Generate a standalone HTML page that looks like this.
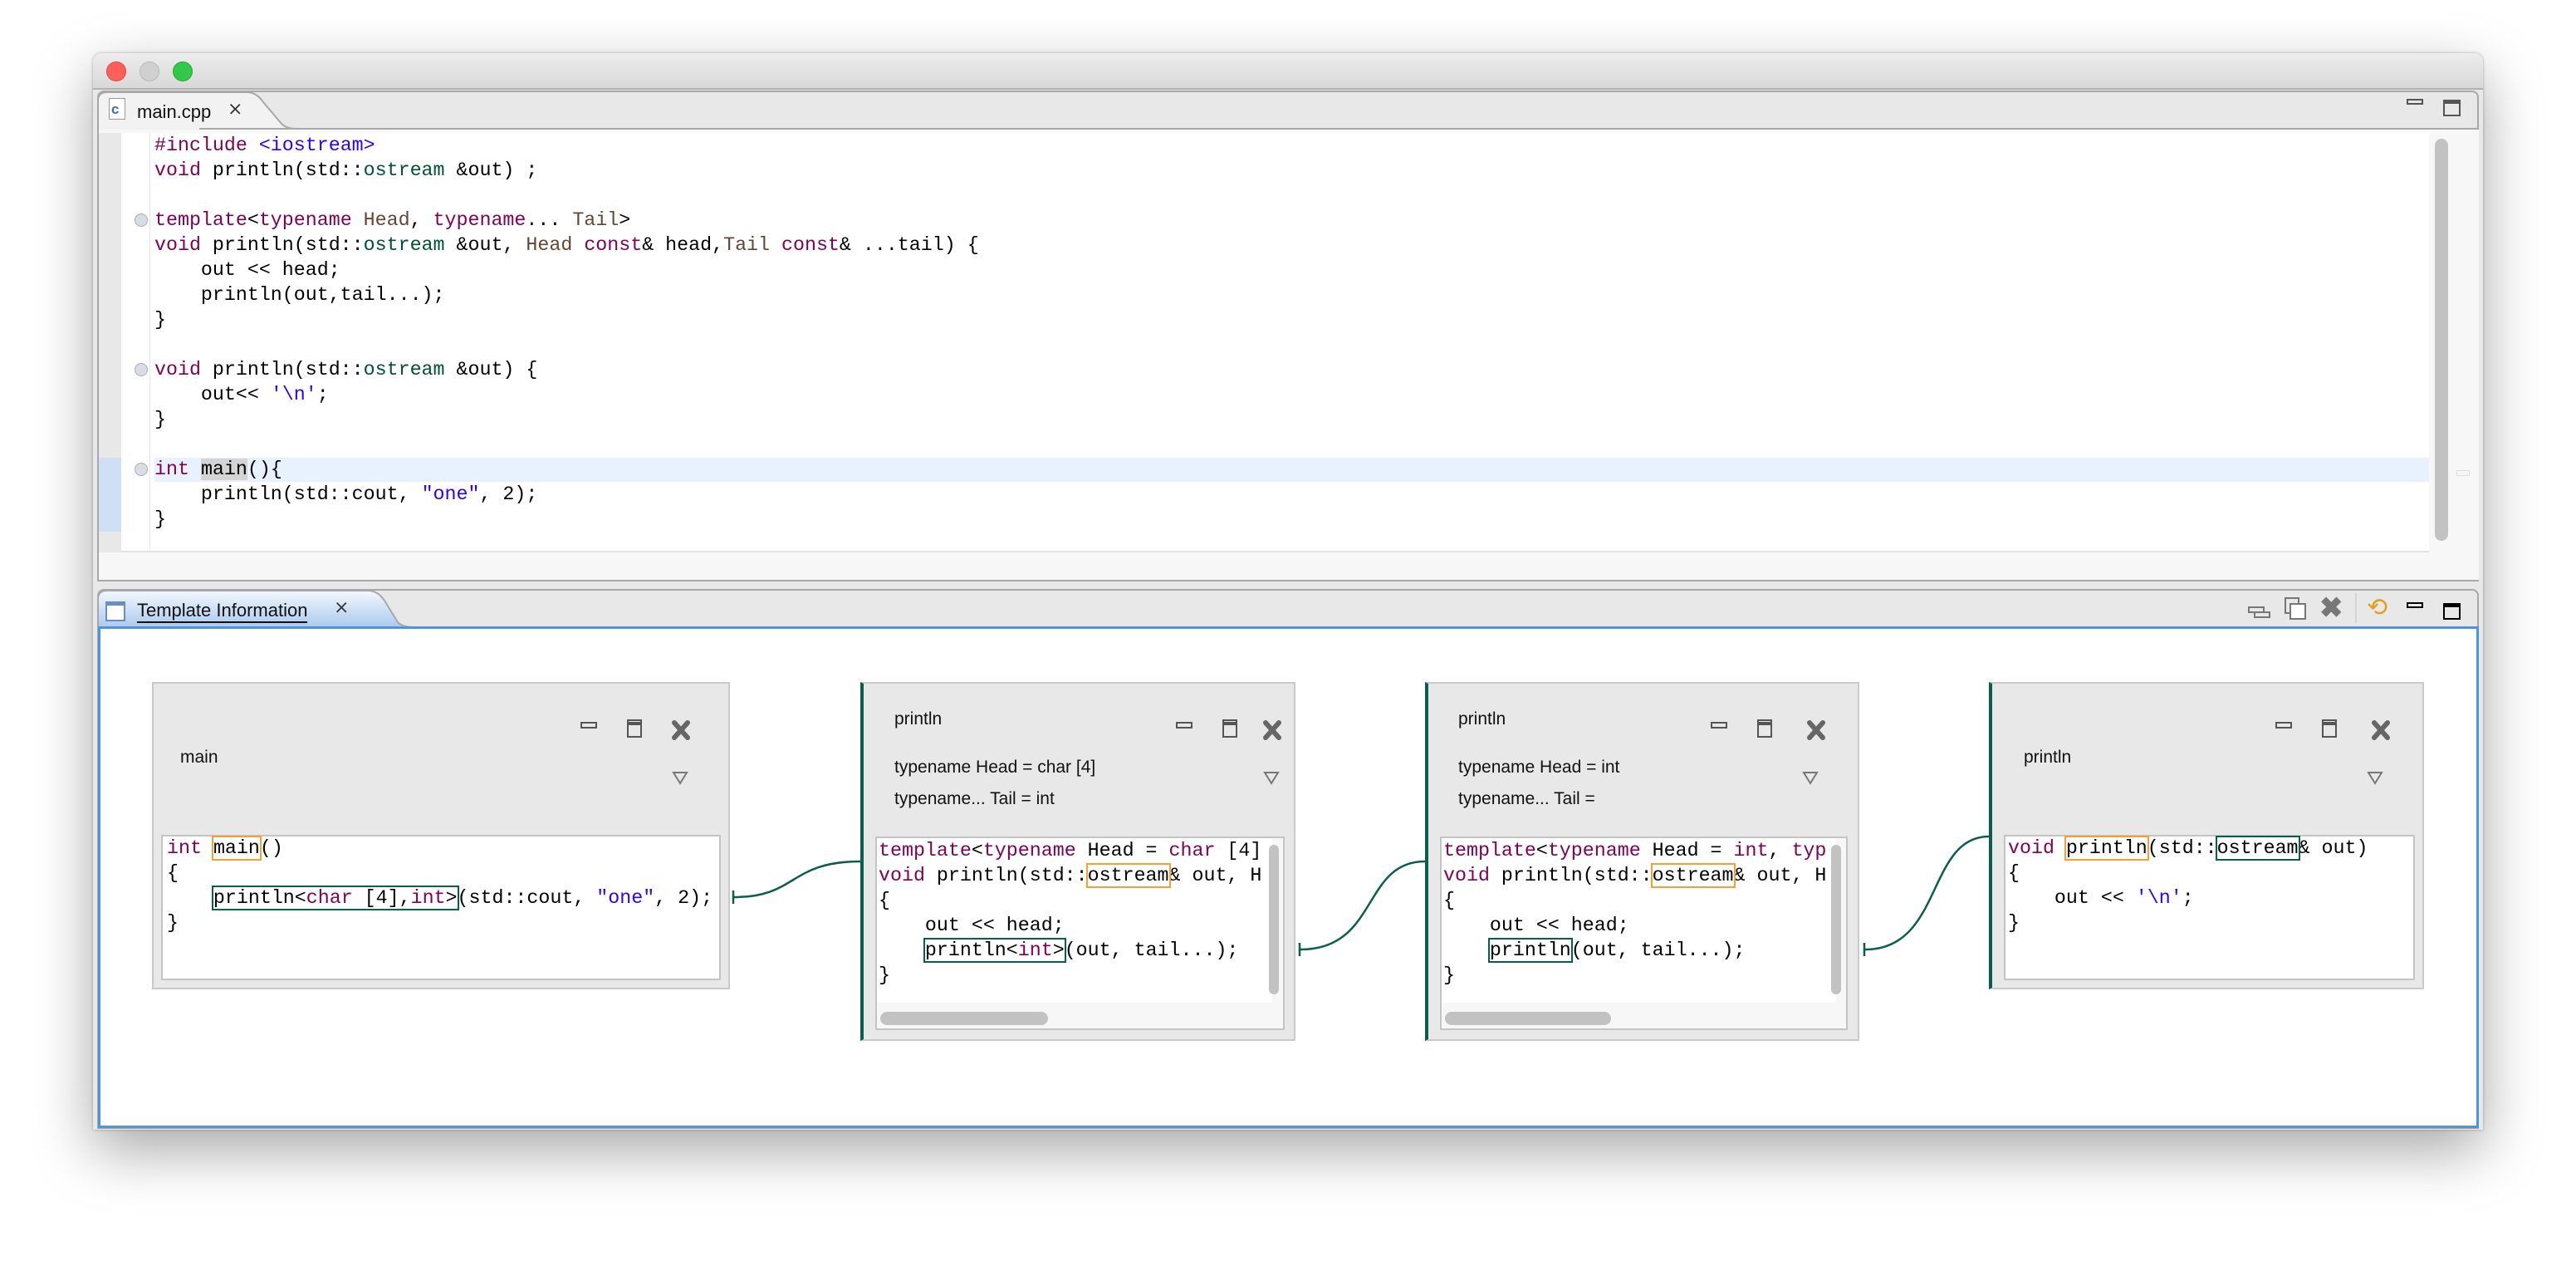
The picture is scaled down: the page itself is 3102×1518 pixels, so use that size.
<!DOCTYPE html>
<html><head><meta charset="utf-8">
<style>
*{margin:0;padding:0;box-sizing:border-box}
body{width:3102px;height:1518px;background:#fff;position:relative;overflow:hidden;font-family:"Liberation Sans",sans-serif}
.a{position:absolute}
.code{font-family:"Liberation Mono",monospace;font-size:23.3px;line-height:30px;white-space:pre;color:#000}
.k{color:#7f0055}.t{color:#005032}.h{color:#644632}.s{color:#2a00ff}
.o{outline:2px solid #f5a030;outline-offset:0}
.g{outline:2px solid #0b5d4c;outline-offset:0}
.lbl{font-size:21px;color:#111}
.box{position:absolute;background:#e8e8e8;border:2px solid #c9c9c9}
.cw{position:absolute;background:#fff;border:2px solid #c4c4c4}
.ic{position:absolute;border:2px solid #555}
</style></head><body>
<div class="a" style="left:112px;top:64px;width:2878px;height:1296px;border-radius:10px 10px 0 0;background:#e8e8e8;box-shadow:0 25px 70px rgba(0,0,0,.35),0 0 3px rgba(0,0,0,.3)"></div>
<div class="a" style="left:112px;top:64px;width:2878px;height:44px;border-radius:10px 10px 0 0;background:linear-gradient(#ededed,#d8d8d8);border-bottom:2px solid #b0b0b0"></div>
<div class="a" style="left:128px;top:74px;width:24px;height:24px;border-radius:50%;background:#fc605b;border:1px solid #de4a45"></div>
<div class="a" style="left:168px;top:74px;width:24px;height:24px;border-radius:50%;background:#d0d0d0;border:1px solid #b8b8b8"></div>
<div class="a" style="left:208px;top:74px;width:24px;height:24px;border-radius:50%;background:#34c84a;border:1px solid #26a934"></div>

<div class="a" style="left:117px;top:109px;width:2868px;height:591px;border:2px solid #a8a8a8;border-radius:8px 8px 0 0;background:#e8e8e8"></div>
<svg class="a" style="left:117px;top:109px" width="260" height="48"><path d="M1 47 V12 Q1 2 12 2 H180 Q192 2 200 14 L222 40 Q228 46 240 46 H260" fill="#f2f2f2" stroke="#a8a8a8" stroke-width="2"/></svg>
<div class="a" style="left:240px;top:154px;width:2745px;height:2px;background:#a8a8a8"></div>
<div class="a" style="left:131px;top:118px;width:20px;height:26px;background:#fff;border:1px solid #999"></div>
<div class="a" style="left:134px;top:122px;font-size:17px;color:#3a6db0;font-weight:bold">c</div>
<div class="a" style="left:165px;top:122px;font-size:22px;color:#111">main.cpp</div>
<div class="a" style="left:274px;top:118px;font-size:22px;color:#333">⨯</div>
<div class="ic" style="left:2898px;top:119px;width:20px;height:7px"></div>
<div class="ic" style="left:2942px;top:120px;width:21px;height:20px;border-top-width:5px"></div>

<div class="a" style="left:119px;top:156px;width:2866px;height:542px;background:#f7f7f7"></div>
<div class="a" style="left:119px;top:160px;width:27px;height:505px;background:#e8e8e8"></div>
<div class="a" style="left:146px;top:160px;width:2779px;height:505px;background:#fff;border-bottom:2px solid #e4e4e4"></div>
<div class="a" style="left:180px;top:160px;width:1px;height:505px;background:#e6e6e6"></div>
<div class="a" style="left:119px;top:551px;width:27px;height:89px;background:#cfe0f5"></div>
<div class="a" style="left:186px;top:551px;width:2739px;height:29px;background:#e8f2fe"></div>
<div class="a" style="left:2932px;top:167px;width:16px;height:484px;border-radius:8px;background:#c2c2c2"></div>
<div class="a" style="left:2958px;top:566px;width:16px;height:7px;border:1px solid #ddd"></div>
<div class="a" style="left:162px;top:257px;width:16px;height:16px;border-radius:50%;background:#d8dde4;border:1px solid #aab"></div>
<div class="a" style="left:162px;top:437px;width:16px;height:16px;border-radius:50%;background:#d8dde4;border:1px solid #aab"></div>
<div class="a" style="left:162px;top:557px;width:16px;height:16px;border-radius:50%;background:#d8dde4;border:1px solid #aab"></div>
<div class="a code" style="left:186px;top:160px"><span class="k">#include</span> <span class="s">&lt;iostream&gt;</span>
<span class="k">void</span> println(std::<span class="t">ostream</span> &amp;out) ;

<span class="k">template</span>&lt;<span class="k">typename</span> <span class="h">Head</span>, <span class="k">typename</span>... <span class="h">Tail</span>&gt;
<span class="k">void</span> println(std::<span class="t">ostream</span> &amp;out, <span class="h">Head</span> <span class="k">const</span>&amp; head,<span class="h">Tail</span> <span class="k">const</span>&amp; ...tail) {
    out &lt;&lt; head;
    println(out,tail...);
}

<span class="k">void</span> println(std::<span class="t">ostream</span> &amp;out) {
    out&lt;&lt; <span class="s">'\n'</span>;
}

<span class="k">int</span> <span style="background:#d4d4d4">main</span>(){
    println(std::cout, <span class="s">"one"</span>, 2);
}</div>

<div class="a" style="left:117px;top:709px;width:2868px;height:650px;border:2px solid #a8a8a8;border-radius:8px 8px 0 0;background:#e8e8e8"></div>
<svg class="a" style="left:117px;top:709px" width="380" height="48"><defs><linearGradient id="tb" x1="0" y1="0" x2="0" y2="1"><stop offset="0" stop-color="#f4f8fd"/><stop offset="1" stop-color="#a9c9ee"/></linearGradient></defs><path d="M1 47 V12 Q1 2 12 2 H326 Q338 2 346 14 L362 40 Q368 46 380 46" fill="url(#tb)" stroke="#a8a8a8" stroke-width="2"/></svg>
<div class="a" style="left:127px;top:724px;width:24px;height:24px;background:#fff;border:2px solid #6a8fbf;border-top-width:5px"></div>
<div class="a" style="left:165px;top:722px;font-size:22px;color:#111;border-bottom:2px solid #111;line-height:26px">Template Information</div>
<div class="a" style="left:402px;top:718px;font-size:22px;color:#333">⨯</div>
<div class="ic" style="left:2707px;top:730px;width:20px;height:8px;border-color:#777"></div>
<div class="ic" style="left:2714px;top:736px;width:20px;height:8px;border-color:#777;background:#e8e8e8"></div>
<div class="ic" style="left:2751px;top:719px;width:18px;height:20px;border-color:#777"></div>
<div class="ic" style="left:2757px;top:726px;width:20px;height:20px;border-color:#777;background:#fff"></div>
<div class="a" style="left:2793px;top:712px;font-size:34px;color:#777;font-weight:bold">✖</div>
<div class="a" style="left:2836px;top:714px;width:2px;height:36px;background:#d4d4d4"></div>
<div class="a" style="left:2850px;top:714px;font-size:30px;color:#e0a020">⟲</div>
<div class="ic" style="left:2898px;top:725px;width:20px;height:7px;border-color:#000"></div>
<div class="ic" style="left:2942px;top:726px;width:21px;height:20px;border-top-width:5px;border-color:#000"></div>

<div class="a" style="left:118px;top:754px;width:2867px;height:604px;background:#fff;border:3px solid #4f94dc"></div>

<div class="box" style="left:183px;top:821px;width:696px;height:370px"></div>
<div class="a lbl" style="left:217px;top:900px">main</div>
<div class="cw" style="left:194px;top:1005px;width:674px;height:175px"></div>
<div class="a code" style="left:201px;top:1006px"><span class="k">int</span> <span class="o">main</span>()
{
    <span class="g">println&lt;<span class="k">char</span> [4],<span class="k">int</span>&gt;</span>(std::cout, <span class="s">"one"</span>, 2);
}</div>

<div class="box" style="left:1036px;top:821px;width:524px;height:432px;border-left:4px solid #0b5d4c"></div>
<div class="a lbl" style="left:1077px;top:854px">println</div>
<div class="a lbl" style="left:1077px;top:912px">typename Head = char [4]</div>
<div class="a lbl" style="left:1077px;top:950px">typename... Tail = int</div>
<div class="cw" style="left:1054px;top:1007px;width:493px;height:233px;background:#f7f7f7"></div>
<div class="a" style="left:1056px;top:1009px;width:476px;height:198px;background:#fff;overflow:hidden"><div class="code" style="position:absolute;left:2px;top:0"><span class="k">template</span>&lt;<span class="k">typename</span> Head = <span class="k">char</span> [4]
<span class="k">void</span> println(std::<span class="o">ostream</span>&amp; out, H
{
    out &lt;&lt; head;
    <span class="g">println&lt;<span class="k">int</span>&gt;</span>(out, tail...);
}</div></div>
<div class="a" style="left:1528px;top:1017px;width:12px;height:180px;border-radius:6px;background:#c2c2c2"></div>
<div class="a" style="left:1060px;top:1218px;width:202px;height:16px;border-radius:8px;background:#c2c2c2"></div>

<div class="box" style="left:1716px;top:821px;width:523px;height:432px;border-left:4px solid #0b5d4c"></div>
<div class="a lbl" style="left:1756px;top:854px">println</div>
<div class="a lbl" style="left:1756px;top:912px">typename Head = int</div>
<div class="a lbl" style="left:1756px;top:950px">typename... Tail =</div>
<div class="cw" style="left:1734px;top:1007px;width:491px;height:233px;background:#f7f7f7"></div>
<div class="a" style="left:1736px;top:1009px;width:474px;height:198px;background:#fff;overflow:hidden"><div class="code" style="position:absolute;left:2px;top:0"><span class="k">template</span>&lt;<span class="k">typename</span> Head = <span class="k">int</span>, <span class="k">typ</span>
<span class="k">void</span> println(std::<span class="o">ostream</span>&amp; out, H
{
    out &lt;&lt; head;
    <span class="g">println</span>(out, tail...);
}</div></div>
<div class="a" style="left:2205px;top:1017px;width:12px;height:180px;border-radius:6px;background:#c2c2c2"></div>
<div class="a" style="left:1740px;top:1218px;width:200px;height:16px;border-radius:8px;background:#c2c2c2"></div>

<div class="box" style="left:2395px;top:821px;width:524px;height:370px;border-left:4px solid #0b5d4c"></div>
<div class="a lbl" style="left:2437px;top:900px">println</div>
<div class="cw" style="left:2413px;top:1005px;width:495px;height:175px"></div>
<div class="a code" style="left:2418px;top:1006px"><span class="k">void</span> <span class="o">println</span>(std::<span class="g">ostream</span>&amp; out)
{
    out &lt;&lt; <span class="s">'\n'</span>;
}</div>

<svg class="a" style="left:0;top:0" width="3102" height="1518">
<g fill="none" stroke="#555" stroke-width="2">
<rect x="700" y="870" width="18" height="6"/><rect x="756" y="867" width="16" height="20"/><line x1="756" y1="871" x2="772" y2="871" stroke-width="4"/>
<rect x="1417" y="870" width="18" height="6"/><rect x="1473" y="867" width="16" height="20"/><line x1="1473" y1="871" x2="1489" y2="871" stroke-width="4"/>
<rect x="2061" y="870" width="18" height="6"/><rect x="2117" y="867" width="16" height="20"/><line x1="2117" y1="871" x2="2133" y2="871" stroke-width="4"/>
<rect x="2741" y="870" width="18" height="6"/><rect x="2797" y="867" width="16" height="20"/><line x1="2797" y1="871" x2="2813" y2="871" stroke-width="4"/>
<path d="M811 930 L827 930 L819 943 Z M1523 930 L1539 930 L1531 943 Z M2172 930 L2188 930 L2180 943 Z M2852 930 L2868 930 L2860 943 Z" stroke="#777"/>
</g>
<g stroke="#666" stroke-width="6" stroke-linecap="round">
<path d="M812 870 L828 888 M828 870 L812 888"/>
<path d="M1524 870 L1540 888 M1540 870 L1524 888"/>
<path d="M2179 870 L2195 888 M2195 870 L2179 888"/>
<path d="M2859 870 L2875 888 M2875 870 L2859 888"/>
</g>
<g fill="none" stroke="#0b5d4c" stroke-width="2.5">
<path d="M883 1072 V1088 M884 1080 C960 1080 950 1037 1036 1037"/>
<path d="M1565 1135 V1151 M1566 1143 C1660 1143 1640 1037 1716 1037"/>
<path d="M2245 1135 V1151 M2246 1143 C2340 1143 2320 1007 2395 1007"/>
</g>
</svg>
</body></html>
